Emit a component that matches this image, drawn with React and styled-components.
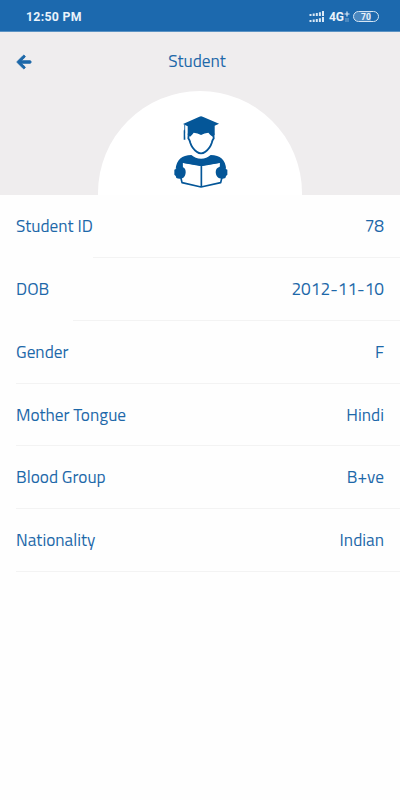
import React from 'react';
import styled, { createGlobalStyle } from 'styled-components';
import { FaArrowLeft } from 'react-icons/fa';

const GlobalStyle = createGlobalStyle`
  * {
    box-sizing: border-box;
  }

  body {
    margin: 0;
    background: #fefefe;
    font-family: "Titillium Web", "Noto Sans", sans-serif;
  }
`;

const Screen = styled.div`
  width: 100%;
  min-height: 800px;
  color: #1d68a9;
`;

const StatusBar = styled.div`
  display: flex;
  align-items: center;
  justify-content: space-between;
  height: 32px;
  padding: 2px 21px 0 26px;
  background: #1c69ae;
  border-bottom: 1px solid #5b93c4;
  color: #eaf3fb;
  font-family: Roboto, sans-serif;
`;

const Clock = styled.span`
  font-size: 12.3px;
  font-weight: 700;
  letter-spacing: 0.3px;
`;

const StatusIcons = styled.div`
  display: flex;
  align-items: center;
`;

const Network = styled.span`
  margin-left: 4px;
  font-size: 12px;
  font-weight: 700;
`;

const Battery = styled.span`
  display: flex;
  align-items: center;
  justify-content: center;
  width: 26px;
  height: 11px;
  margin-left: 3px;
  border: 1px solid #d5e5f3;
  border-radius: 6px;
  background: linear-gradient(90deg, #4a87bf 70%, #1c69ae 70%);
  font-size: 8.5px;
  font-weight: 700;
`;

const Header = styled.header`
  display: flex;
  flex-direction: column;
  height: 163px;
  background: #efedee;
`;

const TitleBar = styled.div`
  display: grid;
  grid-template-columns: 32px 1fr 32px;
  align-items: center;
  height: 59px;
  padding: 0 16px 1px;
`;

const BackButton = styled.button`
  display: flex;
  padding: 1px 0 0;
  border: 0;
  background: none;
  color: inherit;
  font-size: 16px;

  path {
    stroke: currentColor;
    stroke-width: 30px;
    stroke-linejoin: round;
  }
`;

const Text = styled.span`
  font-size: 17.3px;
  line-height: 24px;
  white-space: nowrap;
`;

const Title = styled(Text)`
  margin-left: -6px;
  text-align: center;
`;

const Avatar = styled.div`
  display: flex;
  justify-content: center;
  width: 204px;
  height: 104px;
  margin: 0 auto;
  padding: 25px 0 0 2px;
  border-radius: 102px 102px 0 0;
  background: #fff;
`;

const List = styled.div`
  display: flex;
  flex-direction: column;
  padding-top: 0.3px;
`;

const Row = styled.div`
  display: flex;
  flex-direction: column;
  height: 62.75px;
`;

const RowContent = styled.div`
  display: flex;
  align-items: center;
  justify-content: space-between;
  flex: 1;
  padding: 0.3px 16px 0;
`;

const Divider = styled.div`
  height: 1px;
  margin-left: ${({ $inset }) => $inset}px;
  background: #f3f3f3;
`;

const details = [
  { label: 'Student ID', value: '78', inset: 93 },
  { label: 'DOB', value: '2012-11-10', inset: 73 },
  { label: 'Gender', value: 'F', inset: 16 },
  { label: 'Mother Tongue', value: 'Hindi', inset: 16 },
  { label: 'Blood Group', value: 'B+ve', inset: 16 },
  { label: 'Nationality', value: 'Indian', inset: 16 },
];

const SignalIcon = () => (
  <svg width="16" height="12" viewBox="0 0 16 12" fill="#d9e8f5">
    <path d="M0.5 3h2v2h-2zM3.7 2.6h2V5h-2zM6.8 2h2v3h-2zM9.9 1.2h2V5h-2zM13 0h2v5h-2z" />
    <path d="M0.5 9h2v2h-2zM3.7 8.6h2V11h-2zM6.8 8h2v3h-2zM9.9 7.2h2V11h-2zM13 6h2v5h-2z" />
  </svg>
);

const DataIcon = () => (
  <svg width="6" height="12" viewBox="0 0 6 12" fill="none" stroke="#d9e8f5">
    <path d="M3 0.5v5M0.5 3h5" strokeWidth="1.2" />
    <path d="M2 7v4M4 7v4" strokeWidth="0.9" opacity="0.55" />
  </svg>
);

const StudentIcon = () => (
  <svg width="53.4" height="72" viewBox="42 32 160 216" fill="#045698">
    {/* cap and hair */}
    <path d="M69 56L118 34Q123 32 128 34L177 55L164 61V88L158 94Q149 88 145 82Q133 83 123 89Q113 83 101 82Q97 88 90 94L83 88V63Z" />
    <path d="M74 58V84" fill="none" stroke="#045698" strokeWidth="2.5" />
    <path d="M72.5 72L75 76L76 103H71L71 76Z" />
    {/* face */}
    <path
      d="M86 85L85 99Q89 104 91 113Q96 129 110 139Q123 149 136 139Q150 129 155 113Q157 104 161 99L160 85"
      fill="none"
      stroke="#045698"
      strokeWidth="5.5"
    />
    {/* shoulders and collar */}
    <path d="M47 190Q51 150 94 149Q106 160 123 160Q140 160 152 149Q195 150 198 190L180 190L181 172L124 181L66 172L67 190Z" />
    {/* book */}
    <path
      d="M66 186V170L124 180L182 170V186M62 215L66 232L123 245L182 232L186 215M124 180V245"
      fill="none"
      stroke="#045698"
      strokeWidth="5"
      strokeLinejoin="round"
    />
    {/* hands */}
    <path d="M50 182Q62 179 69 186Q77 189 77 201Q76 214 69 218Q58 223 49 218L47 212L43 208V193L49 190Z" />
    <path d="M195 182Q183 179 176 186Q167 189 167 201Q168 214 176 218Q187 223 196 218L198 212L202 208V193L196 190Z" />
  </svg>
);

const App = () => {
  return (
    <Screen>
      <GlobalStyle />
      <StatusBar>
        <Clock>12:50 PM</Clock>
        <StatusIcons>
          <SignalIcon />
          <Network>4G</Network>
          <DataIcon />
          <Battery>70</Battery>
        </StatusIcons>
      </StatusBar>
      <Header>
        <TitleBar>
          <BackButton aria-label="Back">
            <FaArrowLeft />
          </BackButton>
          <Title>Student</Title>
        </TitleBar>
        <Avatar>
          <StudentIcon />
        </Avatar>
      </Header>
      <List>
        {details.map((item) => (
          <Row key={item.label}>
            <RowContent>
              <Text>{item.label}</Text>
              <Text>{item.value}</Text>
            </RowContent>
            <Divider $inset={item.inset} />
          </Row>
        ))}
      </List>
    </Screen>
  );
};

export default App;
